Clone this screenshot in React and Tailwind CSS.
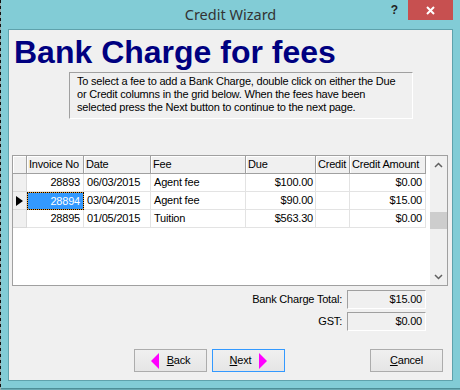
import React from 'react';

const rows = [
  { inv: '28893', date: '06/03/2015', fee: 'Agent fee', due: '$100.00', credit: '', amount: '$0.00' },
  { inv: '28894', date: '03/04/2015', fee: 'Agent fee', due: '$90.00', credit: '', amount: '$15.00', current: true },
  { inv: '28895', date: '01/05/2015', fee: 'Tuition', due: '$563.30', credit: '', amount: '$0.00' },
];

const headers = ['', 'Invoice No', 'Date', 'Fee', 'Due', 'Credit', 'Credit Amount'];

const cols = 'grid grid-cols-[14px_57px_67px_95px_70px_34px_76px]';

function Chevron({ down }) {
  return (
    <svg width="9" height="6" viewBox="0 0 9 6">
      <polyline
        points={down ? '1,1 4.5,4.5 8,1' : '1,5 4.5,1.5 8,5'}
        fill="none"
        stroke="#606060"
        strokeWidth="1.5"
      />
    </svg>
  );
}

function Arrow({ left }) {
  return (
    <svg width="8" height="16" viewBox="0 0 8 16">
      <polygon points={left ? '8,0 0,8 8,16' : '0,0 8,8 0,16'} fill="#ff00ff" />
    </svg>
  );
}

function WizButton({ children, active }) {
  return (
    <button
      className={
        'w-[73px] h-[23px] flex items-center justify-center gap-[8px] border bg-gradient-to-b from-[#f0f0f0] to-[#e5e5e5] text-black ' +
        (active ? 'border-[#3399ff]' : 'border-[#acacac]')
      }
    >
      {children}
    </button>
  );
}

function TotalRow({ label, value }) {
  return (
    <div className="flex items-center justify-end gap-[5px] pr-[26px]">
      <span>{label}</span>
      <div className="w-[79px] h-[19px] flex items-center justify-end pr-[3px] border border-t-[#a0a0a0] border-l-[#a0a0a0] border-r-white border-b-white">
        {value}
      </div>
    </div>
  );
}

export default function App() {
  return (
    <div className="w-[460px] h-[390px] flex bg-[#6aa9b2] overflow-hidden font-['Liberation_Sans',Arial,sans-serif] text-[11px] tracking-[-0.2px] text-black">
      <div className="w-px h-[390px] bg-[repeating-linear-gradient(to_bottom,#111_0px,#111_3px,#9aa_3px,#9aa_6px)]" />
      <div className="w-[459px] h-[389px] bg-[#82ccd6] border-b border-[#4e8f98] flex flex-col">
        {/* title bar */}
        <div className="h-[29px] grid grid-cols-[1fr_auto_1fr]">
          <div />
          <div className="font-['Noto_Sans',sans-serif] text-[14.5px] tracking-normal leading-[29px] text-[#333]">
            Credit Wizard
          </div>
          <div className="flex justify-end items-start pr-[7px]">
            <div className="h-[20px] flex items-center mr-[10px] font-bold text-[12px] text-[#222] tracking-normal">?</div>
            <div className="w-[45px] h-[20px] bg-[#c75050] flex items-center justify-center">
              <svg width="9" height="9" viewBox="0 0 9 9">
                <path d="M1 1 L8 8 M8 1 L1 8" stroke="#fff" strokeWidth="2" />
              </svg>
            </div>
          </div>
        </div>

        {/* client */}
        <div className="ml-[7px] w-[445px] h-[352px] border border-[#5fa2ac] bg-[#f0f0f0] flex flex-col">
          <h1 className="mt-[6px] pl-[5px] text-[32px] leading-[32px] font-bold tracking-normal text-[#000080]">
            Bank Charge for fees
          </h1>

          <div className="mt-[4px] ml-[60px] w-[344px] h-[47px] pt-[2px] pl-[7px] leading-[13px] whitespace-nowrap border border-t-[#a0a0a0] border-l-[#a0a0a0] border-r-white border-b-white">
            To select a fee to add a Bank Charge, double click on either the Due
            <br />
            or Credit columns in the grid below. When the fees have been
            <br />
            selected press the Next button to continue to the next page.
          </div>

          {/* grid */}
          <div className="mt-[36px] ml-[3px] w-[436px] h-[131px] border border-[#a0a0a0] bg-white flex">
            <div className="w-[417px] flex flex-col">
              <div className={cols + ' h-[18px]'}>
                {headers.map((h, i) => (
                  <div
                    key={i}
                    className="bg-[#f0f0f0] border-r border-b border-[#a0a0a0] shadow-[inset_1px_1px_0_#fff] pl-[2px] leading-[17px] whitespace-nowrap overflow-hidden"
                  >
                    {h}
                  </div>
                ))}
              </div>
              {rows.map((r) => (
                <div key={r.inv} className={cols + ' h-[18px] leading-[17px] whitespace-nowrap'}>
                  <div className="bg-[#f0f0f0] border-r border-b border-[#d9d9d9] flex items-center pl-[3px]">
                    {r.current && (
                      <svg width="7" height="10" viewBox="0 0 7 10">
                        <polygon points="0,0 7,5 0,10" fill="#000" />
                      </svg>
                    )}
                  </div>
                  {r.current ? (
                    <div className="text-right pr-[3px] text-white border border-dotted border-black [background:linear-gradient(#3399ff,#3399ff)_padding-box,#f0a030_border-box] leading-[16px]">
                      {r.inv}
                    </div>
                  ) : (
                    <div className="text-right pr-[3px] border-r border-b border-[#e3e3e3]">{r.inv}</div>
                  )}
                  <div className="pl-[3px] border-r border-b border-[#e3e3e3]">{r.date}</div>
                  <div className="pl-[3px] border-r border-b border-[#e3e3e3]">{r.fee}</div>
                  <div className="text-right pr-[2px] border-r border-b border-[#e3e3e3]">{r.due}</div>
                  <div className="border-r border-b border-[#e3e3e3]">{r.credit}</div>
                  <div className="text-right pr-[3px] border-r border-b border-[#e3e3e3]">{r.amount}</div>
                </div>
              ))}
            </div>
            <div className="w-[17px] bg-[#f0f0f0] flex flex-col">
              <div className="h-[17px] flex items-center justify-center">
                <Chevron />
              </div>
              <div className="flex-1">
                <div className="mt-[39px] h-[17px] bg-[#cdcdcd]" />
              </div>
              <div className="h-[17px] flex items-center justify-center">
                <Chevron down />
              </div>
            </div>
          </div>

          {/* totals */}
          <div className="mt-[4px] flex flex-col gap-[3px]">
            <TotalRow label="Bank Charge Total:" value="$15.00" />
            <TotalRow label="GST:" value="$0.00" />
          </div>

          {/* buttons */}
          <div className="mt-[18px] flex gap-[5px] pl-[125px] pr-[9px]">
            <WizButton>
              <Arrow left />
              <span>
                <u>B</u>ack
              </span>
            </WizButton>
            <WizButton active>
              <span>
                <u>N</u>ext
              </span>
              <Arrow />
            </WizButton>
            <div className="ml-auto">
              <WizButton>
                <span>
                  <u>C</u>ancel
                </span>
              </WizButton>
            </div>
          </div>
        </div>
      </div>
    </div>
  );
}
